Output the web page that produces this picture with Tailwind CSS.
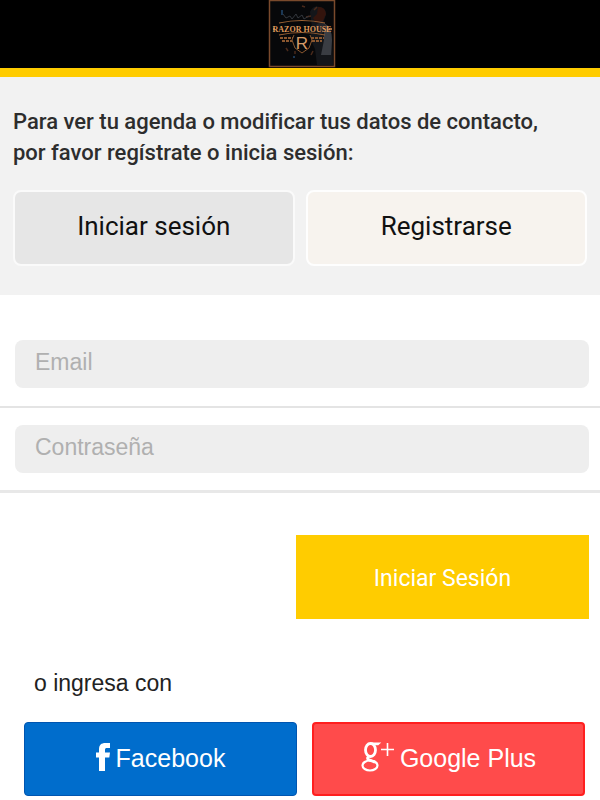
<!DOCTYPE html>
<html lang="es">
<head>
<meta charset="UTF-8">
<title>Razor House - Iniciar sesión</title>
<meta name="viewport" content="width=device-width, initial-scale=1">
<script src="https://cdn.jsdelivr.net/npm/@tailwindcss/browser@4"></script>
</head>
<body class="bg-white font-['Liberation_Sans',Arial,sans-serif]">

<!-- ===== HEADER ===== -->
<header class="flex justify-center pl-1 bg-black border-b-9 border-[#ffcc00]">
  <a href="#" aria-label="Razor House">
    <svg class="block w-[68px] h-[68px]" viewBox="0 0 68 68">
      <rect x="1.5" y="0.5" width="65" height="66" fill="#07080a" stroke="#7a4a2c" stroke-width="1.5"/>
      <!-- barber on the right -->
      <path d="M42 12q3-7 10-5q7 2 6 8l-3 8q8 3 9 14l1 28H49l-2-16q-7-12-3-22z" fill="#14161a"/>
      <path d="M50 7q7-1 8 7l-3 7-7 2-3-5 4-4z" fill="#33140d"/>
      <path d="M56 23q8 4 8 17l-1 15h-10l3-15z" fill="#3a3d43"/>
      <path d="M48 25l6-4 5 6-6 8z" fill="#22242a"/>
      <path d="M46 10l3-3M38 17l5-1M34 6l3 1M18 48l2 3M27 51v3M43 55l2-4" stroke="#4a2a1b" stroke-width="1.5"/>
      <path d="M14 10v5M26 56v2" stroke="#1b3855" stroke-width="2"/>
      <path d="M15 14l3 4 4-2 2 3 4-5 2 4 4-3 2 4 5-3" fill="none" stroke="#33373d"/>
      <!-- badge -->
      <path d="M11 23q23-5 46 0M11 35q23-5 46 0" fill="none" stroke="#9b6234" stroke-width="1.2"/>
      <path d="M5 29h2M61 29h3" stroke="#d08b50" stroke-width="1.5"/>
      <text x="34" y="32" text-anchor="middle" font-family="Liberation Serif, serif" font-weight="bold" font-size="8" fill="#df995b">RAZOR HOUSE</text>
      <path d="M12 38h13M14 41h10M43 38h13M44 41h10" stroke="#8a572f" stroke-width="1.8" stroke-dasharray="3 1"/>
      <path d="M26 35l-2 5 3 8 7 5 7-5 3-8-2-5" fill="none" stroke="#8a572f"/>
      <text x="34" y="49" text-anchor="middle" font-family="Liberation Sans, sans-serif" font-size="17" fill="#d59b68">R</text>
    </svg>
  </a>
</header>

<main>

<!-- ===== TABS ===== -->
<section class="bg-[#f2f2f2] px-[13px] pt-[29px] pb-[29px] font-[Roboto,sans-serif]">
  <p class="text-[22px] leading-[31px] font-medium text-[#2d2d2d] [font-variant-ligatures:none]">Para ver tu agenda o modificar tus datos de contacto,<br>por favor regístrate o inicia sesión:</p>
  <div class="grid grid-cols-2 gap-[11px] mt-[22px] text-[26px] leading-8 text-[#111]">
    <button type="button" class="h-[76px] pb-1 rounded-lg border-2 border-[#fafafa] bg-[#e6e6e6] cursor-pointer">Iniciar sesión</button>
    <button type="button" class="h-[76px] pb-1 rounded-lg border-2 border-[#fefefe] bg-[#f7f3ee] cursor-pointer">Registrarse</button>
  </div>
</section>

<!-- ===== LOGIN ===== -->
<form class="pt-[27px]" onsubmit="return false">
  <div class="pl-[15px] pr-[11px] py-[18px] border-b-2 border-[#e4e4e4]">
    <input type="email" name="email" aria-label="Email" placeholder="Email" class="block w-full h-12 px-5 pb-1 rounded-lg bg-[#eeeeee] text-[23px] text-[#333] placeholder:text-[#b0b0b0]">
  </div>
  <div class="pl-[15px] pr-[11px] pt-[17px] pb-[17px] border-b-3 border-[#e8e8e8]">
    <input type="password" name="password" aria-label="Contraseña" placeholder="Contraseña" class="block w-full h-12 px-5 pb-1 rounded-lg bg-[#eeeeee] text-[23px] text-[#333] placeholder:text-[#b0b0b0]">
  </div>
  <div class="flex justify-end pr-[11px] pt-[42px]">
    <button type="submit" class="w-1/2 max-w-[293px] h-[84px] pt-1 bg-[#ffcc00] text-white text-[23px] font-[Roboto,sans-serif] cursor-pointer">Iniciar Sesión</button>
  </div>
</form>

<!-- ===== SOCIAL ===== -->
<section class="pl-6 pr-[15px] pt-12 pb-1">
  <p class="pl-[10px] text-[23px] leading-8 text-[#222]">o ingresa con</p>
  <div class="grid grid-cols-2 gap-[15px] mt-[23px] text-[25px] text-white">
    <button type="button" class="flex items-center justify-center gap-1.5 h-[74px] rounded-sm border border-[#0055b0] bg-[#006dcc] cursor-pointer">
      <svg class="w-[14px] h-[28px] mb-1" viewBox="0 0 14 28" fill="currentColor" aria-hidden="true">
        <path d="M3 28V14.500H0V9.500h3V6.500C3 2 5.200 0 9.500 0H14v5h-3c-1.500 0-2 .6-2 2v2.500h5l-.7 5H9V28z"/>
      </svg>
      <span>Facebook</span>
    </button>
    <button type="button" class="flex items-center justify-center gap-1.5 h-[74px] rounded-sm border-2 border-[#ff1f1f] bg-[#ff4b4b] cursor-pointer">
      <svg class="w-[33px] h-[30px] mb-1" viewBox="0 0 33 30" fill="none" stroke="currentColor" aria-hidden="true">
        <ellipse cx="9.500" cy="8" rx="5" ry="6.500" stroke-width="2.800"/>
        <path d="M10 1.200H18.500L17 2.600H13" stroke-width="1.400"/>
        <path d="M8 14.500c-3.500 2.500 0 3.500 6 5.500" stroke-width="3"/>
        <ellipse cx="9" cy="23.500" rx="7.500" ry="5" stroke-width="2.200"/>
        <path d="M20 7.500H33M26.500 1V14" stroke-width="1.600"/>
      </svg>
      <span>Google Plus</span>
    </button>
  </div>
</section>

</main>
</body>
</html>
